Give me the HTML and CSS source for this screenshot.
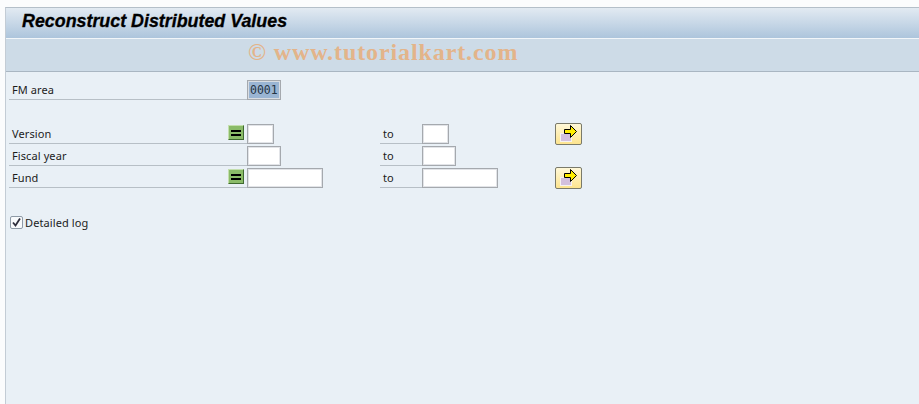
FILE: index.html
```html
<!DOCTYPE html>
<html lang="en">
<head>
<meta charset="utf-8">
<title>Reconstruct Distributed Values</title>
<link rel="stylesheet" href="styles.css">
</head>
<body>
<div class="window">
  <header class="titlebar"><h1>Reconstruct Distributed Values</h1></header>
  <div class="toolbar"><span class="watermark">© www.tutorialkart.com</span></div>
  <main class="form">
    <div class="row row-single">
      <div class="label label-main">FM area</div>
      <div class="field w34 selected"><span>0001</span></div>
    </div>
    <div class="group">
      <div class="row">
        <div class="label label-main">Version<span class="eq"><i></i><i></i></span></div>
        <div class="field w27"></div>
        <div class="spacer s1"></div>
        <div class="label label-to">to</div>
        <div class="field w27"></div>
        <button class="more m1" type="button"><svg width="25" height="20" viewBox="0 0 25 20"><rect x="4.500" y="9.500" width="11" height="8" fill="#d3c0dd" stroke="#f6f2f0"/><path d="M8.500 5.500h6v-4l6 6-6 6v-4h-6z" fill="#ffee00" stroke="#000"/></svg></button>
      </div>
      <div class="row">
        <div class="label label-main">Fiscal year</div>
        <div class="field w34"></div>
        <div class="spacer s2"></div>
        <div class="label label-to">to</div>
        <div class="field w34"></div>
      </div>
      <div class="row">
        <div class="label label-main">Fund<span class="eq"><i></i><i></i></span></div>
        <div class="field w76"></div>
        <div class="spacer s3"></div>
        <div class="label label-to">to</div>
        <div class="field w76"></div>
        <button class="more m3" type="button"><svg width="25" height="20" viewBox="0 0 25 20"><rect x="4.500" y="9.500" width="11" height="8" fill="#d3c0dd" stroke="#f6f2f0"/><path d="M8.500 5.500h6v-4l6 6-6 6v-4h-6z" fill="#ffee00" stroke="#000"/></svg></button>
      </div>
    </div>
    <div class="check-row">
      <span class="check"><svg width="13" height="13" viewBox="0 0 13 13"><path d="M3 6.500l2.500 3 4.500-7" fill="none" stroke="#2e2e3c" stroke-width="1.800"/></svg></span>
      <span class="check-label">Detailed log</span>
    </div>
  </main>
</div>
</body>
</html>
```

FILE: styles.css
```css
* { box-sizing: border-box; }
html, body { margin: 0; height: 100%; }
body {
  background: #fbfcfd;
  padding: 7px 0 0 5px;
  overflow: hidden;
  font-family: "Noto Sans", "DejaVu Sans", sans-serif;
  font-size: 11px;
  letter-spacing: 0.1px;
  color: #1c1c1c;
}
.window {
  height: 397px;
  background: #e9f0f6;
  border-left: 1px solid #c3ccd5;
  border-top: 1px solid #b4bfc9;
  display: flex;
  flex-direction: column;
}
.titlebar {
  height: 30px;
  background: linear-gradient(#e2eaf2, #adc5dc);
  padding-left: 16px;
  display: flex;
  align-items: flex-start;
}
.titlebar h1 {
  margin: 0;
  font-family: "Liberation Sans", sans-serif;
  font-size: 17.85px;
  font-weight: bold;
  font-style: italic;
  letter-spacing: 0;
  -webkit-text-stroke: 0.3px #000;
  color: #000;
  line-height: 27px;
}
.toolbar {
  height: 34px;
  background: #cddbe7;
  border-top: 1px solid #f2f6f9;
  border-bottom: 1px solid #a9b6c2;
  padding-left: 242px;
  display: flex;
  align-items: flex-start;
}
.watermark {
  font-family: "Liberation Serif", serif;
  font-weight: bold;
  font-size: 24px;
  line-height: 26px;
  color: #e3b48a;
  letter-spacing: 0.9px;
}
.form { padding: 6px 0 0 3px; }
.row { display: flex; height: 22px; align-items: flex-end; }
.row-single { margin-bottom: 22px; }
.label {
  height: 22px;
  border-bottom: 1px solid #b7bfc6;
  line-height: 24px;
  display: flex;
  justify-content: space-between;
  align-items: center;
  padding-top: 2px;
}
.label-main { width: 238px; padding-left: 3px; padding-right: 3px; }
.label-to { width: 42px; padding-left: 3px; }
.eq {
  width: 16px;
  height: 15px;
  margin-top: -2px;
  background: #8abb68;
  border: 1px solid;
  border-color: #c4dfae #3f6a30 #3f6a30 #c4dfae;
  display: flex;
  flex-direction: column;
  justify-content: center;
  align-items: center;
  gap: 2px;
}
.eq i { display: block; width: 10px; height: 2px; background: #000; }
.field {
  height: 20px;
  background: #fff;
  border: 1px solid #a5a9ae;
  box-shadow: inset 0 0 0 1px #e2e4e8;
}
.w27 { width: 27px; }
.w34 { width: 34px; }
.w76 { width: 76px; }
.s1 { width: 106px; }
.s2 { width: 99px; }
.s3 { width: 57px; }
.spacer { flex: none; }
.selected {
  padding: 1px 2px;
  background: #9ab5d3;
  box-shadow: inset 0 0 0 1px #d8dde3;
  font-family: "DejaVu Sans Mono", monospace;
  font-size: 11.5px;
  letter-spacing: 0;
  line-height: 16px;
  color: #243444;
}
.selected span { display: block; }
.more {
  width: 27px;
  height: 22px;
  padding: 0;
  background: linear-gradient(#fff8d8, #fde48e);
  border: 1px solid #7a7a6a;
  border-radius: 2px;
  align-self: flex-start;
  display: flex;
  align-items: flex-start;
}
.m1 { margin-left: 106px; margin-top: 1px; }
.m3 { margin-left: 57px; margin-top: 1px; }
.check-row {
  display: flex;
  align-items: center;
  height: 22px;
  margin-top: 23px;
  padding-left: 1px;
  gap: 2px;
}
.check {
  width: 13px;
  height: 13px;
  background: #f8fafc;
  border: 1px solid #8e9aa6;
  border-radius: 2px;
  display: flex;
}
.check svg { margin: -1px; flex: none; }
```
